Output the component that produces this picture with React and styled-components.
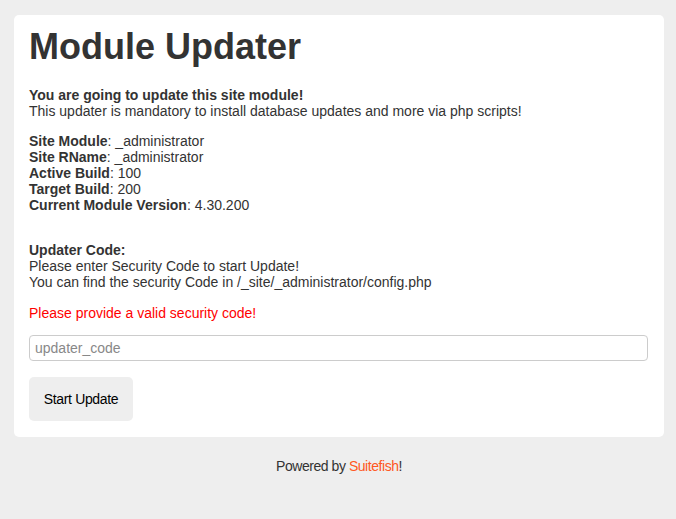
import React from "react";
import styled, { createGlobalStyle } from "styled-components";

const Global = createGlobalStyle`
  html, body { margin: 0; padding: 0; }
  body {
    background: #eeeeee;
    font-family: "Liberation Sans", Arial, sans-serif;
    font-size: 14px;
    color: #333333;
  }
`;

const Page = styled.div`
  padding: 15px 12px 0 14px;
`;

const Card = styled.main`
  background: #ffffff;
  border-radius: 5px;
  padding: 11px 16px 16px 15px;
`;

const Title = styled.h1`
  margin: 0 0 19px 0;
  font-size: 36px;
  font-weight: bold;
  color: #333333;
`;

const Para = styled.p`
  margin: 0 0 ${(p) => p.$mb || 0}px 0;
  line-height: 16px;
  color: ${(p) => (p.$error ? "#ff0000" : "#333333")};
`;

const Input = styled.input`
  display: block;
  box-sizing: border-box;
  width: 100%;
  height: 26px;
  border: 1px solid #cccccc;
  border-radius: 4px;
  padding: 0 5px;
  font-family: "Liberation Sans", Arial, sans-serif;
  font-size: 14px;
  color: #333;
  margin: 0 0 16px 0;
  &::placeholder { color: #888888; }
`;

const Button = styled.button`
  display: block;
  width: 104px;
  height: 44px;
  border: none;
  border-radius: 5px;
  background: #eeeeee;
  color: #000000;
  font-family: "Liberation Sans", Arial, sans-serif;
  font-size: 14px;
  letter-spacing: -0.35px;
  padding: 0;
`;

const Footer = styled.footer`
  text-align: center;
  padding-top: 21px;
  line-height: 16px;
  letter-spacing: -0.45px;
  color: #333333;
`;

const Link = styled.a`
  color: #ff5722;
  text-decoration: none;
`;

export default function App() {
  return (
    <>
      <Global />
      <Page>
        <Card>
          <Title>Module Updater</Title>
          <Para $mb={14}>
            <b>You are going to update this site module!</b>
            <br />
            This updater is mandatory to install database updates and more via php scripts!
          </Para>
          <Para $mb={29}>
            <b>Site Module</b>: _administrator
            <br />
            <b>Site RName</b>: _administrator
            <br />
            <b>Active Build</b>: 100
            <br />
            <b>Target Build</b>: 200
            <br />
            <b>Current Module Version</b>: 4.30.200
          </Para>
          <Para $mb={15}>
            <b>Updater Code:</b>
            <br />
            Please enter Security Code to start Update!
            <br />
            You can find the security Code in /_site/_administrator/config.php
          </Para>
          <Para $error $mb={14}>Please provide a valid security code!</Para>
          <Input placeholder="updater_code" />
          <Button>Start Update</Button>
        </Card>
        <Footer>
          Powered by <Link href="#">Suitefish</Link>!
        </Footer>
      </Page>
    </>
  );
}
